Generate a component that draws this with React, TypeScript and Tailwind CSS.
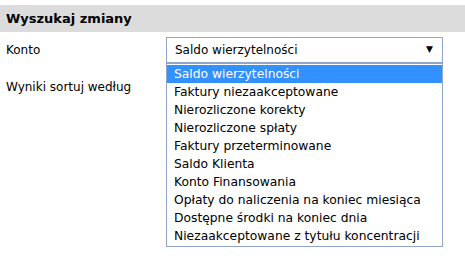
const options = [
  "Saldo wierzytelności",
  "Faktury niezaakceptowane",
  "Nierozliczone korekty",
  "Nierozliczone spłaty",
  "Faktury przeterminowane",
  "Saldo Klienta",
  "Konto Finansowania",
  "Opłaty do naliczenia na koniec miesiąca",
  "Dostępne środki na koniec dnia",
  "Niezaakceptowane z tytułu koncentracji",
];

export default function App() {
  return (
    <main className="h-[256px] w-[465px] overflow-hidden bg-white pt-[5px] font-['DejaVu_Sans',sans-serif] text-[12px] text-black">
      <div className="flex h-[27px] items-center bg-[#dcdcdc] px-[6px] text-[13px] font-bold">
        Wyszukaj zmiany
      </div>
      <div className="mt-[5px] flex h-[26px] items-center">
        <label className="w-[166px] pl-[6px]">Konto</label>
        <div className="relative w-[277px]">
          <div className="flex h-[26px] items-center justify-between border border-[#8fa6c9] pl-[8px] pr-[9px]">
            <span>Saldo wierzytelności</span>
            <span className="text-[9px]">▼</span>
          </div>
          <ul className="absolute left-0 top-full w-full border border-[#8fa6c9] bg-white py-[1px] text-[12.3px]">
            {options.map((option, i) => (
              <li
                key={option}
                className={
                  i === 0
                    ? "flex h-[18px] items-center bg-[#3390ff] px-[7px] text-white"
                    : "flex h-[18px] items-center px-[7px]"
                }
              >
                {option}
              </li>
            ))}
          </ul>
        </div>
      </div>
      <div className="mt-[11px] flex h-[26px] items-center">
        <label className="w-[166px] pl-[6px]">Wyniki sortuj według</label>
      </div>
    </main>
  );
}
